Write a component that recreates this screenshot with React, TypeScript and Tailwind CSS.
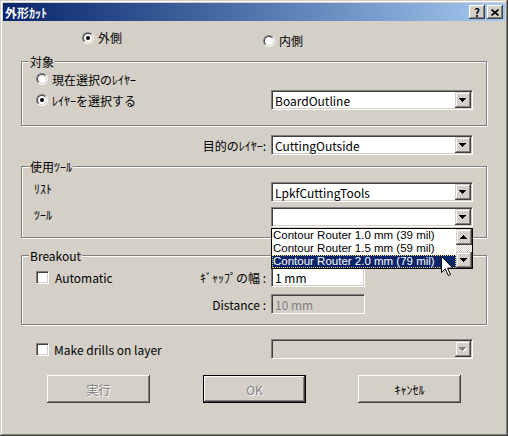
import React from 'react'

const sunken =
  'border border-t-[#808080] border-l-[#808080] border-r-white border-b-white shadow-[inset_1px_1px_#404040,inset_-1px_-1px_#d4d0c8]'
const raised =
  'bg-[#d4d0c8] shadow-[inset_-1px_-1px_#404040,inset_1px_1px_#d4d0c8,inset_-2px_-2px_#808080,inset_2px_2px_#fff]'
const btnRaised =
  'bg-[#d4d0c8] shadow-[inset_-1px_-1px_#404040,inset_1px_1px_#fff,inset_-2px_-2px_#808080,inset_2px_2px_#d4d0c8]'
const disabledText = 'text-[#808080] [text-shadow:1px_1px_0_#fff]'

function Arrow({ up, disabled }: { up?: boolean; disabled?: boolean }) {
  const d = up
    ? 'M3 0h1v1h1v1h1v1h1v1h-7v-1h1v-1h1v-1h1z'
    : 'M0 0h7v1h-1v1h-1v1h-1v1h-1v-1h-1v-1h-1v-1h-1z'
  return (
    <svg width="8" height="5" viewBox="0 0 8 5" shapeRendering="crispEdges">
      {disabled && <path d={d} fill="#fff" transform="translate(1 1)" />}
      <path d={d} fill={disabled ? '#808080' : '#000'} />
    </svg>
  )
}

function Combo({
  value,
  disabled,
  children,
}: {
  value?: string
  disabled?: boolean
  children?: React.ReactNode
}) {
  return (
    <div
      className={`relative flex h-[20px] w-[202px] shrink-0 ${sunken} ${
        disabled ? 'bg-[#d4d0c8]' : 'bg-white'
      }`}
    >
      <div className="flex flex-1 items-center pl-[3px]">{value}</div>
      <div className={`my-[1px] mr-[1px] flex h-[16px] w-[16px] items-center justify-center ${raised}`}>
        <Arrow disabled={disabled} />
      </div>
      {children}
    </div>
  )
}

function Radio({ checked, label }: { checked?: boolean; label: string }) {
  return (
    <div className="flex items-center gap-[4px]">
      <div className="h-[12px] w-[12px] rounded-full border border-t-[#808080] border-l-[#808080] border-r-white border-b-white">
        <div className="flex h-[10px] w-[10px] items-center justify-center rounded-full border border-t-[#404040] border-l-[#404040] border-r-[#d4d0c8] border-b-[#d4d0c8] bg-white">
          {checked && <div className="h-[4px] w-[4px] rounded-full bg-black" />}
        </div>
      </div>
      <span>{label}</span>
    </div>
  )
}

function Check({ label }: { label: string }) {
  return (
    <div className="flex items-center gap-[6px]">
      <div className={`h-[13px] w-[13px] bg-white ${sunken}`} />
      <span>{label}</span>
    </div>
  )
}

function Group({
  label,
  className,
  children,
}: {
  label: string
  className: string
  children: React.ReactNode
}) {
  return (
    <div
      className={`relative ml-[21px] w-[466px] border border-[#808080] shadow-[inset_1px_1px_#fff,1px_1px_#fff] ${className}`}
    >
      <span className="absolute -top-[7px] left-[7px] bg-[#d4d0c8] px-[1px]">{label}</span>
      {children}
    </div>
  )
}

const tools = [
  'Contour Router 1.0 mm (39 mil)',
  'Contour Router 1.5 mm (59 mil)',
  'Contour Router 2.0 mm (79 mil)',
]

export default function App() {
  return (
    <div className="relative h-[436px] w-[508px] overflow-hidden bg-[#d4d0c8] pt-[3px] font-['Noto_Sans_CJK_JP',sans-serif] text-[12px] leading-[13px] text-black shadow-[inset_-1px_-1px_#404040,inset_1px_1px_#d4d0c8,inset_-2px_-2px_#808080,inset_2px_2px_#fff]">
      {/* title bar */}
      <div className="mx-[3px] flex h-[18px] items-center bg-linear-to-r from-[#0a246a] to-[#a6caf0] pl-[2px] pr-[2px]">
        <span className="font-bold text-white">外形ｶｯﾄ</span>
        <div className={`ml-auto flex h-[14px] w-[16px] items-center justify-center text-[11px] font-bold ${btnRaised}`}>
          ?
        </div>
        <div className={`ml-[2px] flex h-[14px] w-[16px] items-center justify-center ${btnRaised}`}>
          <svg width="8" height="7" viewBox="0 0 8 7">
            <path d="M0.5 0.5l7 6M7.5 0.5l-7 6" stroke="#000" strokeWidth="1.6" />
          </svg>
        </div>
      </div>

      <div className="mt-[10px] flex h-[16px] items-start">
        <div className="ml-[82px] w-[181px]">
          <Radio checked label="外側" />
        </div>
        <div className="mt-[3px]">
          <Radio label="内側" />
        </div>
      </div>

      <Group label="対象" className="mt-[14px] h-[65px] pt-[9px]">
        <div className="flex h-[16px] items-center pl-[14px]">
          <Radio label="現在選択のﾚｲﾔｰ" />
        </div>
        <div className="mt-[3px] flex h-[20px] items-center justify-between pl-[14px] pr-[13px]">
          <Radio checked label="ﾚｲﾔｰを選択する" />
          <Combo value="BoardOutline" />
        </div>
      </Group>

      <div className="mt-[9px] flex h-[20px] w-[473px] items-center">
        <span className="flex-1 pr-[5px] text-right">目的のﾚｲﾔｰ:</span>
        <Combo value="CuttingOutside" />
      </div>

      <Group label="使用ﾂｰﾙ" className="mt-[11px] h-[72px] pt-[15px]">
        <div className="flex h-[20px] items-center justify-between pl-[12px] pr-[13px]">
          <span className="mb-[8px]">ﾘｽﾄ</span>
          <Combo value="LpkfCuttingTools" />
        </div>
        <div className="relative z-10 mt-[5px] flex h-[20px] items-center justify-between pl-[12px] pr-[13px]">
          <span className="mb-[6px]">ﾂｰﾙ</span>
          <Combo>
            <div className="absolute left-[-1px] top-[20px] flex h-[41px] w-[202px] border border-black bg-white">
              <div className="flex-1">
                {tools.map((t, i) => (
                  <div
                    key={t}
                    className={`h-[13px] whitespace-nowrap pl-[1px] font-['Liberation_Sans',sans-serif] text-[11.5px] leading-[13px] ${
                      i === 2
                        ? 'bg-[#0a246a] text-white outline-1 -outline-offset-1 outline-dotted outline-[#e8d870]'
                        : ''
                    }`}
                  >
                    {t}
                  </div>
                ))}
              </div>
              <div className="flex w-[16px] flex-col">
                <div className={`flex h-[16px] items-center justify-center ${raised}`}>
                  <Arrow up />
                </div>
                <div className="flex-1 bg-[repeating-conic-gradient(#d4d0c8_0_25%,#ffffff_0_50%)] bg-[length:2px_2px]" />
                <div className={`flex h-[16px] items-center justify-center ${raised}`}>
                  <Arrow />
                </div>
              </div>
            </div>
          </Combo>
        </div>
      </Group>

      <Group label="Breakout" className="mt-[17px] h-[70px] pt-[11px]">
        <div className="flex h-[20px] items-center pl-[14px] pr-[121px]">
          <div className="flex-1">
            <Check label="Automatic" />
          </div>
          <span className="pr-[5px]">ｷﾞｬｯﾌﾟの幅 :</span>
          <div className={`flex h-[20px] w-[94px] items-center bg-white pl-[3px] ${sunken}`}>1 mm</div>
        </div>
        <div className="mt-[7px] flex h-[20px] items-center justify-end pr-[121px]">
          <span className="pr-[5px]">Distance :</span>
          <div className={`flex h-[20px] w-[94px] items-center bg-[#d4d0c8] pl-[3px] text-[#808080] ${sunken}`}>
            10 mm
          </div>
        </div>
      </Group>

      <div className="mt-[14px] flex h-[20px] w-[473px] items-center justify-between pl-[36px]">
        <div className="flex items-center gap-[5px]">
          <div className={`h-[13px] w-[13px] bg-white ${sunken}`} />
          <span>Make drills on layer</span>
        </div>
        <Combo disabled />
      </div>

      <div className="mt-[16px] flex h-[28px]">
        <div className={`ml-[47px] flex h-[28px] w-[103px] items-center justify-center ${btnRaised} ${disabledText}`}>
          実行
        </div>
        <div className="ml-[53px] h-[28px] w-[103px] border border-black">
          <div className={`flex h-full w-full items-center justify-center ${btnRaised} ${disabledText}`}>OK</div>
        </div>
        <div className={`ml-[52px] flex h-[28px] w-[103px] items-center justify-center ${btnRaised}`}>ｷｬﾝｾﾙ</div>
      </div>

      {/* mouse pointer */}
      <svg className="absolute left-[441px] top-[256px] z-20" width="13" height="21" viewBox="0 0 13 21">
        <path
          d="M0.5 0.5v16l3.8-3.6 3 6.6 2.2-1-3-6.4h5.3z"
          fill="#fff"
          stroke="#000"
          strokeWidth="1"
          strokeLinejoin="miter"
        />
      </svg>
    </div>
  )
}
